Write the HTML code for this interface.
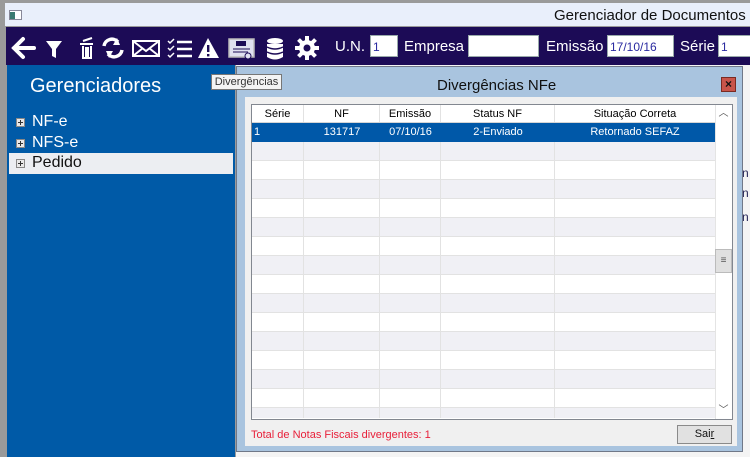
<!DOCTYPE html>
<html><head><meta charset="utf-8"><style>
*{margin:0;padding:0;box-sizing:border-box}
body{width:750px;height:457px;overflow:hidden;background:#fff;font-family:"Liberation Sans",sans-serif;position:relative}
.a{position:absolute}
.inp{position:absolute;background:#fff;border:1px solid #9aa;height:22px;top:35px;font-size:12px;color:#2a2aa0;padding:4px 2px}
.lbl{position:absolute;color:#fff;font-size:15px;top:38px;white-space:nowrap}
.tree{position:absolute;left:9px;font-size:16px;color:#fff;height:21px;width:224px}
.pm{position:absolute;left:7px;top:6px;width:9px;height:9px;background:#e8e8e8;border:1px solid #888}
.pm:before{content:"";position:absolute;left:1px;top:3px;width:5px;height:1px;background:#333}
.pm:after{content:"";position:absolute;left:3px;top:1px;width:1px;height:5px;background:#333}
.row{position:absolute;left:252px;width:463px;height:19px;border-bottom:1px solid #e2e2e2}
.cell{position:absolute;top:0;height:100%;border-right:1px solid #e2e2e2;font-size:11px;text-align:center;line-height:18px}
</style></head><body>
<div class="a" style="left:0;top:0;width:750px;height:457px;background:#9a9a9a"></div>
<div class="a" style="left:5px;top:3px;width:745px;height:23px;background:#e9effb"></div>
<div class="a" style="left:9px;top:10px;width:13px;height:10px;background:#fff;border:1px solid #889"></div>
<div class="a" style="left:10px;top:12px;width:5px;height:7px;background:#3a7a70"></div>
<div class="a" style="left:554px;top:7px;font-size:15px;color:#111;white-space:nowrap">Gerenciador de Documentos El</div>
<div class="a" style="left:6px;top:27px;width:744px;height:38px;background:#1c0b56"></div>
<svg class="a" style="left:0;top:27px" width="330" height="38" viewBox="0 0 330 38" fill="#fff" stroke="#fff">
<path d="M14 21 H34 M23 12 L14 21 L23 30" stroke-width="4" fill="none" stroke-linecap="round"/>
<path d="M46 14 H62 L56 22 V31 L52 29 V22 Z" stroke="none"/>
<path d="M80 17 H93 M83 19 V31 H91 V19 M86 20 V30 M88 20 V30 M83 14 L92 11" stroke-width="2" fill="none"/>
<path d="M104 19 A8 8 0 0 1 118 15 M122 23 A8 8 0 0 1 108 27" stroke-width="3.5" fill="none"/>
<path d="M117 11 L120 18 L113 18 Z M109 31 L106 24 L113 24Z" stroke="none"/>
<rect x="133" y="14" width="26" height="15" fill="none" stroke-width="2"/>
<path d="M133 14 L146 24 L159 14 M133 29 L143 21 M159 29 L149 21" stroke-width="2" fill="none"/>
<path d="M168 14 L170 16 L174 12 M168 21 L170 23 L174 19 M168 28 L170 30 L174 26" stroke-width="1.5" fill="none"/>
<path d="M177 15 H192 M177 22 H192 M177 29 H192" stroke-width="2.5"/>
<path d="M208 11 L219 31 H198 Z" stroke="none"/>
<rect x="207" y="18" width="2.4" height="7" fill="#1c0b56" stroke="none"/><rect x="207" y="27" width="2.4" height="2.4" fill="#1c0b56" stroke="none"/>
<rect x="229" y="12" width="25" height="18" fill="#e0e0f0" stroke="#bbb" stroke-width="1.5"/>
<rect x="236" y="14" width="10" height="5" fill="#1c0b56" stroke="none"/>
<path d="M233 22 H250 M233 25 H248" stroke="#1c0b56" stroke-width="1"/>
<circle cx="248" cy="29" r="3" fill="#e0e0f0" stroke="#1c0b56" stroke-width="1"/>
<ellipse cx="275" cy="14" rx="8" ry="3" stroke="none"/>
<path d="M267 17 V30 Q275 35 283 30 V17" stroke="none"/>
<path d="M267 20 Q275 24 283 20 M267 25 Q275 29 283 25" stroke="#1c0b56" stroke-width="1.5" fill="none"/>
<circle cx="307" cy="21" r="8" stroke="none"/>
<path d="M307 9 V33 M295 21 H319 M298.5 12.5 L315.5 29.5 M315.5 12.5 L298.5 29.5" stroke-width="4"/>
<circle cx="307" cy="21" r="3.5" fill="#1c0b56" stroke="none"/>
</svg>
<div class="lbl" style="left:335px">U.N.</div>
<div class="inp" style="left:370px;width:28px">1</div>
<div class="lbl" style="left:404px">Empresa</div>
<div class="inp" style="left:468px;width:71px"></div>
<div class="lbl" style="left:546px">Emissão</div>
<div class="inp" style="left:607px;width:67px">17/10/16</div>
<div class="lbl" style="left:680px">Série</div>
<div class="inp" style="left:718px;width:40px">1</div>
<div class="a" style="left:7px;top:65px;width:228px;height:392px;background:#005aa7"></div>
<div class="a" style="left:30px;top:75px;font-size:20px;color:#fff">Gerenciadores</div>
<div class="tree" style="top:112px"><span class="pm"></span><span style="position:absolute;left:23px;top:1px">NF-e</span></div>
<div class="tree" style="top:133px"><span class="pm"></span><span style="position:absolute;left:23px;top:1px">NFS-e</span></div>
<div class="tree" style="top:153px;background:#eceef2;color:#111"><span class="pm"></span><span style="position:absolute;left:23px;top:1px">Pedido</span></div>
<div class="a" style="left:236px;top:65px;width:514px;height:392px;background:#f4f4f4"></div>
<div class="a" style="left:742px;top:166px;font-size:12px;color:#225">n</div>
<div class="a" style="left:742px;top:186px;font-size:12px;color:#225">n</div>
<div class="a" style="left:742px;top:210px;font-size:12px;color:#225">n</div>
<div class="a" style="left:236px;top:66px;width:507px;height:386px;background:#a9c4df;border:1px solid #707888"></div>
<div class="a" style="left:437px;top:77px;font-size:15px;color:#111">Divergências NFe</div>
<div class="a" style="left:721px;top:77px;width:15px;height:15px;background:#c8544a;border:1px solid #7a2a22;color:#111;font-size:12px;font-weight:bold;text-align:center;line-height:13px">×</div>
<div class="a" style="left:245px;top:97px;width:492px;height:349px;background:#f0f0f0"></div>
<div class="a" style="left:251px;top:104px;width:482px;height:316px;background:#fff;border:1px solid #828790"></div>
<div id="rows" class="a" style="left:0;top:0;width:750px;height:418px;overflow:hidden"></div>
<div class="row" style="top:105px;height:18px;background:#fff;border-bottom:1px solid #d5d5d5">
<div class="cell" style="left:0;width:52px">Série</div><div class="cell" style="left:52px;width:76px">NF</div><div class="cell" style="left:128px;width:61px">Emissão</div><div class="cell" style="left:189px;width:114px">Status NF</div><div class="cell" style="left:303px;width:160px;border:0">Situação Correta</div></div>
<div class="row" style="top:123px;background:#0058a8;color:#fff;border:0">
<div class="cell" style="left:0;width:52px;text-align:left;padding-left:2px;border:0">1</div><div class="cell" style="left:52px;width:76px;border:0">131717</div><div class="cell" style="left:128px;width:61px;border:0">07/10/16</div><div class="cell" style="left:189px;width:114px;border:0">2-Enviado</div><div class="cell" style="left:303px;width:160px;border:0">Retornado SEFAZ</div></div>
<script>
var h='';for(var i=0;i<15;i++){var t=142+i*19;h+='<div class="row" style="top:'+t+'px;background:'+(i%2==0?'#f0f0f5':'#fff')+'"><div class="cell" style="left:0;width:52px"></div><div class="cell" style="left:52px;width:76px"></div><div class="cell" style="left:128px;width:61px"></div><div class="cell" style="left:189px;width:114px"></div></div>';}
document.getElementById('rows').innerHTML=h;
</script>
<div class="a" style="left:715px;top:105px;width:17px;height:314px;background:#fff;border-left:1px solid #e4e4e4"></div>
<div class="a" style="left:715px;top:105px;width:17px;height:17px;font-size:10px;text-align:center;color:#555;line-height:17px">︿</div>
<div class="a" style="left:715px;top:249px;width:17px;height:24px;background:#e0e0e0;border:1px solid #bbb;font-size:10px;text-align:center;color:#555;line-height:22px">≡</div>
<div class="a" style="left:715px;top:402px;width:17px;height:17px;font-size:10px;text-align:center;color:#555;line-height:17px">﹀</div>
<div class="a" style="left:251px;top:429px;font-size:11px;color:#e8203a">Total de Notas Fiscais divergentes: 1</div>
<div class="a" style="left:677px;top:425px;width:55px;height:19px;background:#e1e1e1;border:1px solid #8a8a8a;font-size:11px;text-align:center;line-height:17px;color:#111">Sai<u>r</u></div>
<div class="a" style="left:211px;top:74px;width:71px;height:16px;background:#f4f4f4;border:1px solid #777;font-size:11px;color:#333;text-align:center;line-height:14px">Divergências</div>
</body></html>
